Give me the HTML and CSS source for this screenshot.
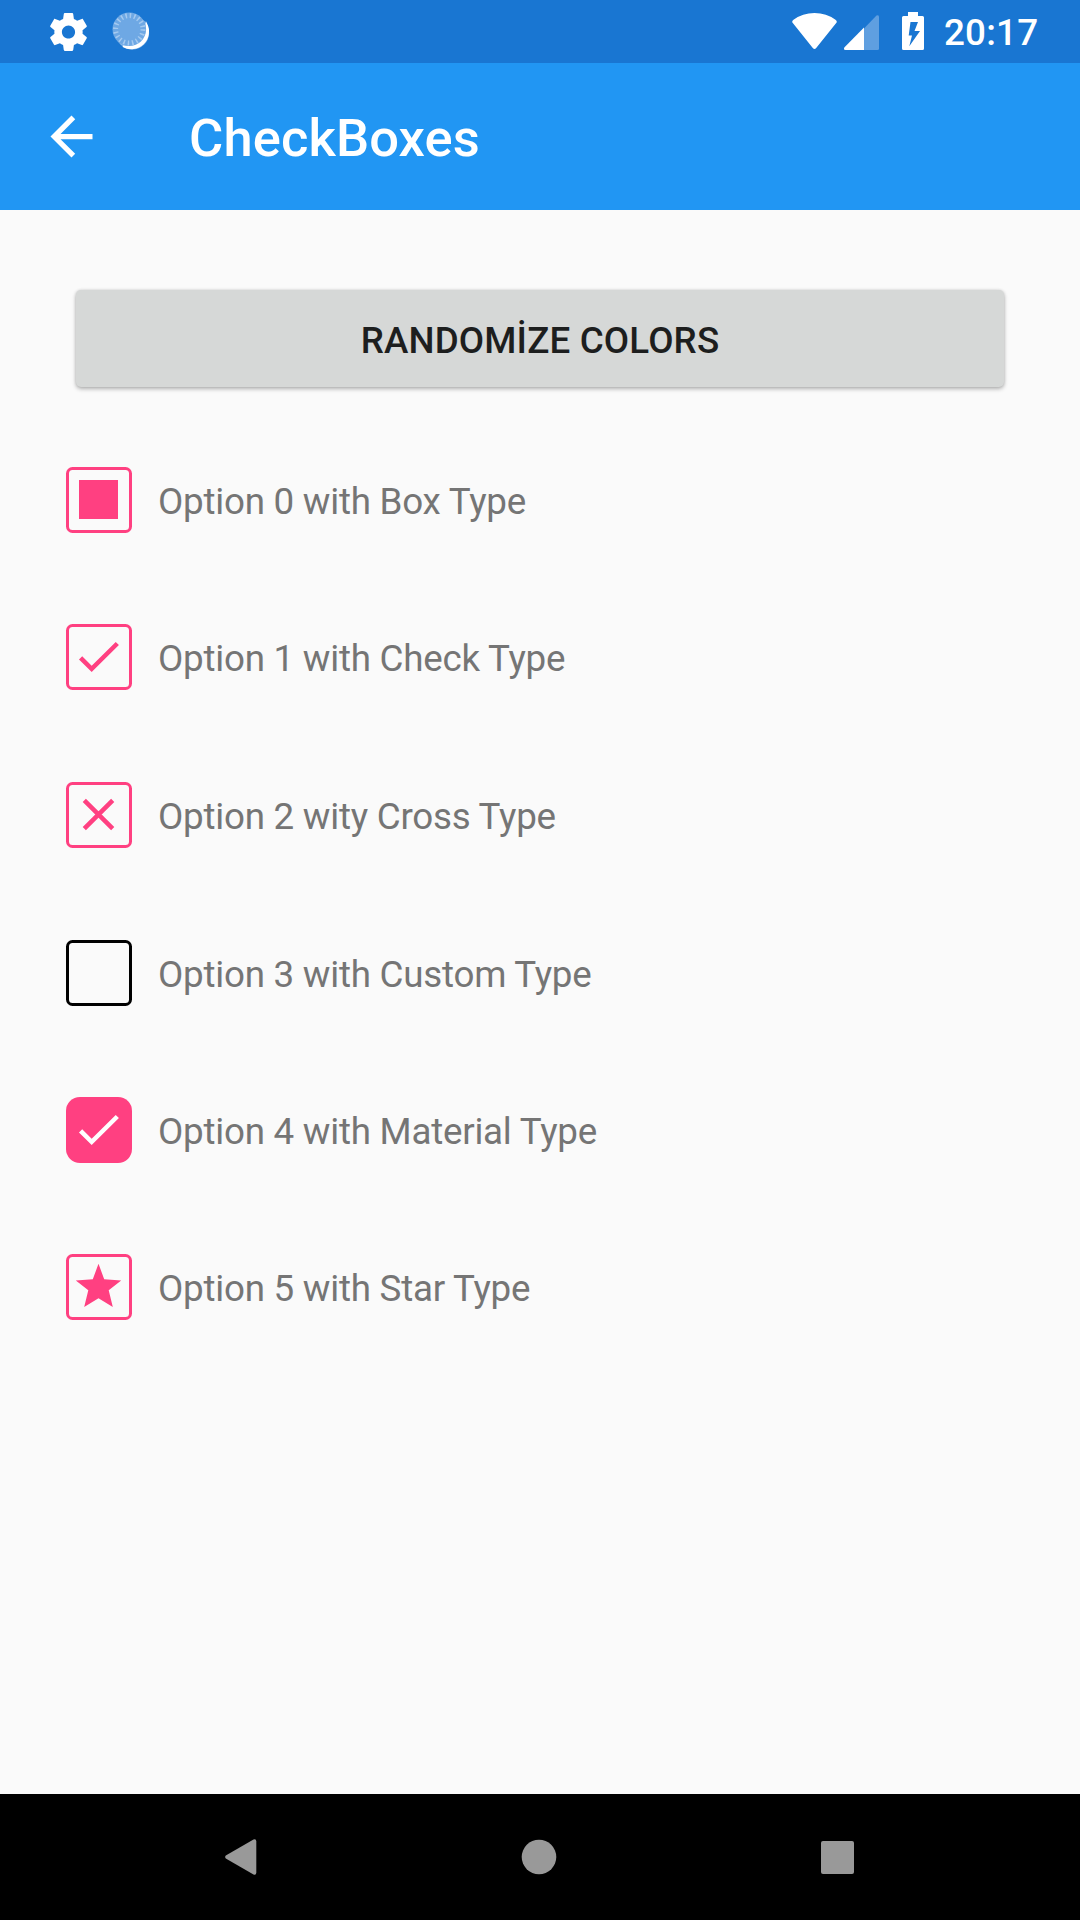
FILE: index.html
```html
<!DOCTYPE html>
<html lang="en">
<head>
<meta charset="utf-8">
<title>CheckBoxes</title>
<link rel="stylesheet" href="styles.css">
</head>
<body>
<div class="screen">
  <div class="status-bar">
    <svg class="gear" viewBox="2.2 2 19.6 20"><path fill="#fff" d="M19.43 12.98c.04-.32.07-.64.07-.98s-.03-.66-.07-.98l2.11-1.65c.19-.15.24-.42.12-.64l-2-3.46c-.12-.22-.39-.3-.61-.22l-2.49 1c-.52-.4-1.08-.73-1.69-.98l-.38-2.65C14.46 2.18 14.25 2 14 2h-4c-.25 0-.46.18-.49.42l-.38 2.65c-.61.25-1.17.59-1.69.98l-2.49-1c-.23-.09-.49 0-.61.22l-2 3.46c-.13.22-.07.49.12.64l2.11 1.65c-.04.32-.07.65-.07.98s.03.66.07.98l-2.11 1.65c-.19.15-.24.42-.12.64l2 3.46c.12.22.39.3.61.22l2.49-1c.52.4 1.08.73 1.69.98l.38 2.65c.03.24.24.42.49.42h4c.25 0 .46-.18.49-.42l.38-2.65c.61-.25 1.17-.59 1.69-.98l2.49 1c.23.09.49 0 .61-.22l2-3.46c.12-.22.07-.49-.12-.64l-2.11-1.65zM12 15.5c-1.93 0-3.5-1.57-3.5-3.5s1.57-3.5 3.5-3.5 3.5 1.57 3.5 3.5-1.57 3.5-3.5 3.5z"/></svg>
    <svg class="spinner" viewBox="0 0 38 38">
      <circle cx="20.3" cy="20.7" r="16.8" fill="#8bb9e9"/>
      <path d="M34.3 11.5A17 17 0 0 1 11 34.3Q31 35.5 34.3 11.5Z" fill="#fff" stroke="#fff" stroke-width="1.5"/>
      <circle cx="17.3" cy="17.3" r="16.8" fill="#6ea8e4"/>
      <circle cx="17.3" cy="17.3" r="13.7" fill="none" stroke="#a5caf0" stroke-width="5" stroke-dasharray="1.5 2.804"/>
    </svg>
    <span class="spacer"></span>
    <svg class="wifi" viewBox="0 0 45 36"><path fill="#fff" d="M.4 9.500Q-.3 8 1.500 6.800Q10.500 0 22.500 0T43.500 6.800Q45.300 8 44.600 9.500L24.200 35Q22.500 37 20.800 35Z"/></svg>
    <svg class="signal" viewBox="0 0 35 35"><path fill="#5f9fe0" d="M20 13.500L32.500.6Q35-.8 35 2V33.500Q35 35 33.500 35H20Z"/><path fill="#fff" d="M20 12.500V35H1.500Q-.8 35 .3 32.500Z"/></svg>
    <svg class="battery" viewBox="0 0 22 38"><path fill="#fff" fill-rule="evenodd" d="M6 0H16V4H20.500Q22 4 22 5.500V36.500Q22 38 20.500 38H1.500Q0 38 0 36.500V5.500Q0 4 1.500 4H6ZM8.500 10L6.700 23.500H10L7.300 34.300L18 19H12.500L16 10Z"/></svg>
    <span class="clock">20:17</span>
  </div>
  <header class="app-bar">
    <svg class="back" viewBox="0 0 24 24"><path fill="#fff" d="M20 11H7.830l5.590-5.590L12 4l-8 8 8 8 1.410-1.410L7.830 13H20v-2z"/></svg>
    <h1 class="title">CheckBoxes</h1>
  </header>
  <main class="content">
    <button class="randomize">RANDOMİZE COLORS</button>
    <div class="options">
      <div class="option"><svg class="box" viewBox="0 0 66 66"><rect class="outline" x="1.500" y="1.500" width="63" height="63" rx="5"/><path class="mark" d="M13 13H52V52H13Z"/></svg><span class="label">Option 0 with Box Type</span></div>
      <div class="option"><svg class="box" viewBox="0 0 66 66"><rect class="outline" x="1.500" y="1.500" width="63" height="63" rx="5"/><path class="mark" transform="translate(5.250 5.350) scale(2.270 2.250)" d="M9 16.170L4.830 12l-1.420 1.410L9 19 21 7l-1.410-1.410z"/></svg><span class="label">Option 1 with Check Type</span></div>
      <div class="option"><svg class="box" viewBox="0 0 66 66"><rect class="outline" x="1.500" y="1.500" width="63" height="63" rx="5"/><path class="cross" d="M18.300 18.300L46.700 46.700M46.700 18.300L18.300 46.700"/></svg><span class="label">Option 2 wity Cross Type</span></div>
      <div class="option"><svg class="box" viewBox="0 0 66 66"><rect class="outline unchecked" x="1.500" y="1.500" width="63" height="63" rx="5"/></svg><span class="label">Option 3 with Custom Type</span></div>
      <div class="option"><svg class="box" viewBox="0 0 66 66"><rect class="mark" width="66" height="66" rx="14"/><path fill="#fff" transform="translate(5.250 5.350) scale(2.270 2.250)" d="M9 16.170L4.830 12l-1.420 1.410L9 19 21 7l-1.410-1.410z"/></svg><span class="label">Option 4 with Material Type</span></div>
      <div class="option"><svg class="box" viewBox="0 0 66 66"><rect class="outline" x="1.500" y="1.500" width="63" height="63" rx="5"/><path class="mark" d="M32.500 9.700L38.200 25.300L55.200 26.500L42.700 36.300L46.800 53L32.500 44.300L18.200 53L22.300 36.300L9.800 26.500L26.800 25.300Z"/></svg><span class="label">Option 5 with Star Type</span></div>
    </div>
  </main>
  <nav class="nav-bar">
    <svg class="nav-back" viewBox="0 0 32 36"><path fill="#999" d="M.8 16.500L28.500.5Q31.300-.3 31.300 2.500V33.500Q31.300 36.300 28.500 35.500L.8 19.500Q-.5 18 .8 16.500Z"/></svg>
    <svg class="nav-home" viewBox="0 0 36 36"><circle cx="18" cy="18" r="17.300" fill="#999"/></svg>
    <svg class="nav-recents" viewBox="0 0 33 33"><rect width="33" height="33" rx="2" fill="#999"/></svg>
  </nav>
</div>
</body>
</html>
```
FILE: styles.css
```css
* { box-sizing: border-box; }
body { margin: 0; font-family: Roboto, sans-serif; }
svg { display: block; flex: none; }
.screen { width: 1080px; height: 1920px; display: flex; flex-direction: column; background: #fafafa; overflow: hidden; }

.status-bar { height: 63px; flex: none; display: flex; align-items: flex-start; background: #1976d2; padding: 12px 42px 0 50px; }
.gear { width: 37px; height: 38px; margin-top: 0.5px; }
.spinner { width: 38px; height: 38px; margin-left: 25px; }
.spacer { flex: 1; }
.wifi { width: 45px; height: 36px; margin-top: 1px; }
.signal { width: 35px; height: 35px; margin: 3px 0 0 7.5px; }
.battery { width: 22px; height: 38px; margin-left: 23px; }
.clock { width: 94px; margin-left: 20px; font-size: 36.75px; font-weight: 500; line-height: 42px; letter-spacing: 0.2px; color: #fff; white-space: nowrap; }

.app-bar { height: 147px; flex: none; display: flex; align-items: center; background: #2196f3; padding-left: 39.5px; }
.back { width: 63px; height: 63px; margin-bottom: 1px; }
.title { margin: 2px 0 0 86.5px; font-size: 52.5px; font-weight: 500; line-height: 62px; letter-spacing: 0.12px; color: #fff; }

.content { flex: 1; padding: 80px 66px 0; display: flex; flex-direction: column; }
.randomize { height: 97px; margin: 0 10px; border: 0; border-radius: 5px; background: #d6d8d7; padding: 3px 0 0; font: 500 36.75px/43px Roboto, sans-serif; letter-spacing: 0.15px; color: #1d1e1e; box-shadow: 0 2px 4px rgba(0, 0, 0, 0.28), 0 0 3px rgba(0, 0, 0, 0.12); }
.options { margin-top: 80px; display: grid; grid-template-rows: 157px 158px 158px 157px 157px 66px; }
.option { display: flex; align-items: center; height: 66px; }
.box { width: 66px; height: 66px; }
.label { margin: 2px 0 0 26px; font-size: 36.75px; line-height: 43px; letter-spacing: -0.24px; color: #757575; white-space: nowrap; }
.outline { fill: none; stroke: #ff4081; stroke-width: 3; }
.unchecked { stroke: #000; }
.mark { fill: #ff4081; }
.cross { fill: none; stroke: #ff4081; stroke-width: 4.5; }

.nav-bar { height: 126px; flex: none; display: flex; align-items: center; background: #000; padding-left: 225px; }
.nav-back { width: 32px; height: 36px; }
.nav-home { width: 36px; height: 36px; margin: 0 0 1px 264px; }
.nav-recents { width: 33px; height: 33px; margin-left: 264px; }
```
